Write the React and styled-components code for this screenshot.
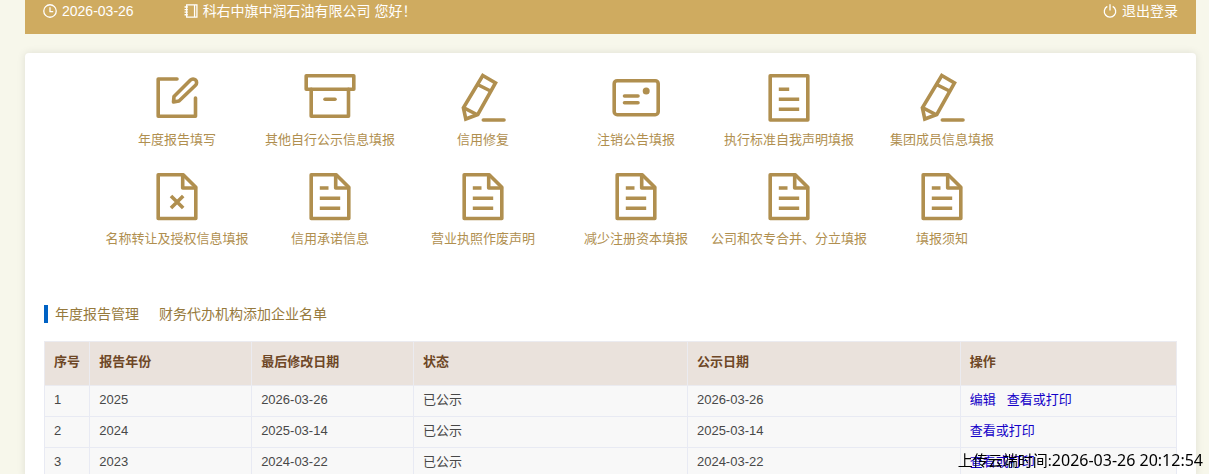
import React from 'react'
import styled, { createGlobalStyle } from 'styled-components'

const tiles = [
    { label: '年度报告填写', icon: 'edit' },
    { label: '其他自行公示信息填报', icon: 'archive' },
    { label: '信用修复', icon: 'pencil' },
    { label: '注销公告填报', icon: 'card' },
    { label: '执行标准自我声明填报', icon: 'list' },
    { label: '集团成员信息填报', icon: 'pencil' },
    { label: '名称转让及授权信息填报', icon: 'docCross' },
    { label: '信用承诺信息', icon: 'doc' },
    { label: '营业执照作废声明', icon: 'doc' },
    { label: '减少注册资本填报', icon: 'doc' },
    { label: '公司和农专合并、分立填报', icon: 'doc' },
    { label: '填报须知', icon: 'doc' },
]

const reports = [
    { id: 1, year: '2025', modified: '2026-03-26', status: '已公示', published: '2026-03-26', editable: true },
    { id: 2, year: '2024', modified: '2025-03-14', status: '已公示', published: '2025-03-14' },
    { id: 3, year: '2023', modified: '2024-03-22', status: '已公示', published: '2024-03-22' },
]

const shapes = {
    edit: (
        <>
            <path d="M28 9H9.2V46.3H46.5V28" />
            <path d="M25 26.5L41.5 10a3.6 3.6 0 0 1 5 5.2L30 31l-5.5 1z" />
        </>
    ),
    archive: (
        <>
            <path d="M4.2 5.7H51.8V19.3H4.2z" />
            <path d="M9.2 19.3V46.3H46.5V19.3" />
            <path d="M23 29.3H33" />
        </>
    ),
    pencil: (
        <>
            <path strokeLinejoin="miter" d="M27.8 5.5L40.5 12.9L22.8 44.5L10.8 49L8.4 37.7z" />
            <path strokeLinecap="butt" d="M23.5 15L35.5 21M8.4 37.7L22.8 45" />
            <path d="M28.3 50H49" />
        </>
    ),
    card: (
        <>
            <rect x="6.2" y="10.7" width="44" height="34" rx="3" />
            <path d="M16.5 26H30M16.5 32.7H30" />
            <circle cx="38.2" cy="21" r="3.5" fill="currentColor" stroke="none" />
        </>
    ),
    list: (
        <>
            <path d="M9.2 5.7H46.8V50H9.2z" />
            <path strokeLinecap="butt" d="M17.8 19.3H28.2M17.8 29.3H38.2M17.8 39.3H38.2" />
        </>
    ),
    doc: (
        <>
            <path d="M9.2 5.7H34.2L46.8 18.3V49.5H9.2z" />
            <path d="M33.7 6V19H46.5" />
            <path strokeLinecap="butt" d="M17.8 19H26.5M17.8 29.3H38.2M17.8 39.3H38.2" />
        </>
    ),
    docCross: (
        <>
            <path d="M9.2 5.7H34.2L46.8 18.3V49.5H9.2z" />
            <path d="M33.7 6V19H46.5" />
            <path strokeLinecap="butt" d="M22 27L34.2 39M34.2 27L22 39" />
        </>
    ),
}

function App() {
    return (
        <Page>
            <GlobalStyle />
            <TopBar>
                <BarItem>
                    <BarIcon viewBox="0 0 13 13">
                        <circle cx="6.5" cy="6.5" r="5.8" />
                        <path d="M6.5 3V7H9.5" />
                    </BarIcon>
                    2026-03-26
                </BarItem>
                <BarItem>
                    <BarIcon viewBox="0 0 13 13">
                        <path d="M2.5 .8H12V12.2H2.5zM9.8 .8V12.2" />
                        <path d="M.5 2.8H3.5M.5 5.2H3.5M.5 7.6H3.5M.5 10H3.5" />
                    </BarIcon>
                    科右中旗中润石油有限公司 您好！
                </BarItem>
                <Logout href="#logout">
                    <BarIcon viewBox="0 0 13 13">
                        <path d="M4 2.2A5.3 5.3 0 1 0 9 2.2M6.5 .3V6" />
                    </BarIcon>
                    退出登录
                </Logout>
            </TopBar>
            <Panel>
                <TileGrid>
                    {tiles.map(tile => (
                        <Tile href="#tile" key={tile.label}>
                            <TileIcon viewBox="0 0 56 56" aria-hidden="true">
                                {shapes[tile.icon]}
                            </TileIcon>
                            <span>{tile.label}</span>
                        </Tile>
                    ))}
                </TileGrid>
                <Tabs>
                    <Tab href="#reports">年度报告管理</Tab>
                    <Tab href="#agents">财务代办机构添加企业名单</Tab>
                </Tabs>
                <Table>
                    <colgroup>
                        <Col $share={4} />
                        <Col $share={14.3} />
                        <Col $share={14.3} />
                        <Col $share={24.2} />
                        <Col $share={24.1} />
                        <Col $share={19.1} />
                    </colgroup>
                    <thead>
                        <tr>
                            <Th>序号</Th>
                            <Th>报告年份</Th>
                            <Th>最后修改日期</Th>
                            <Th>状态</Th>
                            <Th>公示日期</Th>
                            <Th>操作</Th>
                        </tr>
                    </thead>
                    <tbody>
                        {reports.map(report => (
                            <tr key={report.id}>
                                <Td>{report.id}</Td>
                                <Td>{report.year}</Td>
                                <Td>{report.modified}</Td>
                                <Td>{report.status}</Td>
                                <Td>{report.published}</Td>
                                <Td>
                                    <Actions>
                                        {report.editable && <Action href="#edit">编辑</Action>}
                                        <Action href="#view">查看或打印</Action>
                                    </Actions>
                                </Td>
                            </tr>
                        ))}
                    </tbody>
                </Table>
            </Panel>
            <UploadStamp>
                上传云端时间:<time>2026-03-26 20:12:54</time>
            </UploadStamp>
        </Page>
    )
}

export default App


const GlobalStyle = createGlobalStyle`
    * {
        box-sizing: border-box;
    }

    html {
        scrollbar-width: none;
    }

    body {
        margin: 0;
        background: #f7f7eb;
        font-family: "Liberation Sans", "Noto Sans CJK SC", sans-serif;
    }

    a {
        text-decoration: none;
    }
`;

const Page = styled.div`
    padding: 0 13px 0 25px;
`;

const TopBar = styled.header`
    display: flex;
    gap: 50px;
    padding: 0 18px 12px;
    background: #cfab60;
    color: #fff;
    font-size: 14px;
    line-height: 22px;
`;

const BarItem = styled.div`
    display: flex;
    align-items: center;
    gap: 5px;
`;

const Logout = styled.a`
    display: flex;
    align-items: center;
    gap: 5px;
    margin-left: auto;
    color: #fff;
`;

const BarIcon = styled.svg`
    width: 14px;
    height: 14px;
    fill: none;
    stroke: currentColor;
    stroke-width: 1.2;
`;

const Panel = styled.main`
    margin-top: 19px;
    padding: 17px 19px 0;
    background: #fff;
    border-radius: 4px;
    box-shadow: 0 0 8px rgba(0, 0, 0, 0.1);
`;

const TileGrid = styled.nav`
    display: grid;
    grid-template-columns: repeat(6, minmax(0, 1fr));
    row-gap: 19px;
    padding: 0 14% 0 5%;
`;

const Tile = styled.a`
    display: flex;
    flex-direction: column;
    align-items: center;
    gap: 4px;
    color: #b08f4f;
    font-size: 13px;
    line-height: 20px;
    white-space: nowrap;
`;

const TileIcon = styled.svg`
    width: 56px;
    height: 56px;
    fill: none;
    stroke: currentColor;
    stroke-width: 3.6;
    stroke-linecap: round;
    stroke-linejoin: round;
`;

const Tabs = styled.div`
    display: flex;
    gap: 20px;
    margin: 56px 0 18px;
    padding-left: 7px;
    border-left: 4px solid #0062c4;
`;

const Tab = styled.a`
    color: #96793c;
    font-size: 14px;
    line-height: 18px;
`;

const Table = styled.table`
    width: 100%;
    table-layout: fixed;
    border-collapse: collapse;
    font-size: 13px;
    line-height: 20px;
    text-align: left;
`;

const Col = styled.col`
    width: ${props => props.$share}%;
`;

const Th = styled.th`
    height: 44px;
    padding: 0 9px 4px;
    border: 1px solid #ebebf0;
    background: #eae2dc;
    color: #6e4726;
    font-weight: 700;
    white-space: nowrap;
`;

const Td = styled.td`
    padding: 4px 9px 6px;
    border: 1px solid #e8eaf3;
    background: #f8f8f8;
    color: #484848;
`;

const Actions = styled.div`
    display: flex;
    gap: 11px;
`;

const Action = styled.a`
    color: #1400c8;
`;

const UploadStamp = styled.div`
    position: fixed;
    right: 6px;
    bottom: 3px;
    color: #000;
    font-family: "Noto Sans", "Noto Sans CJK SC", sans-serif;
    font-size: 15px;
    line-height: 22px;

    time {
        font-size: 16px;
    }
`;
